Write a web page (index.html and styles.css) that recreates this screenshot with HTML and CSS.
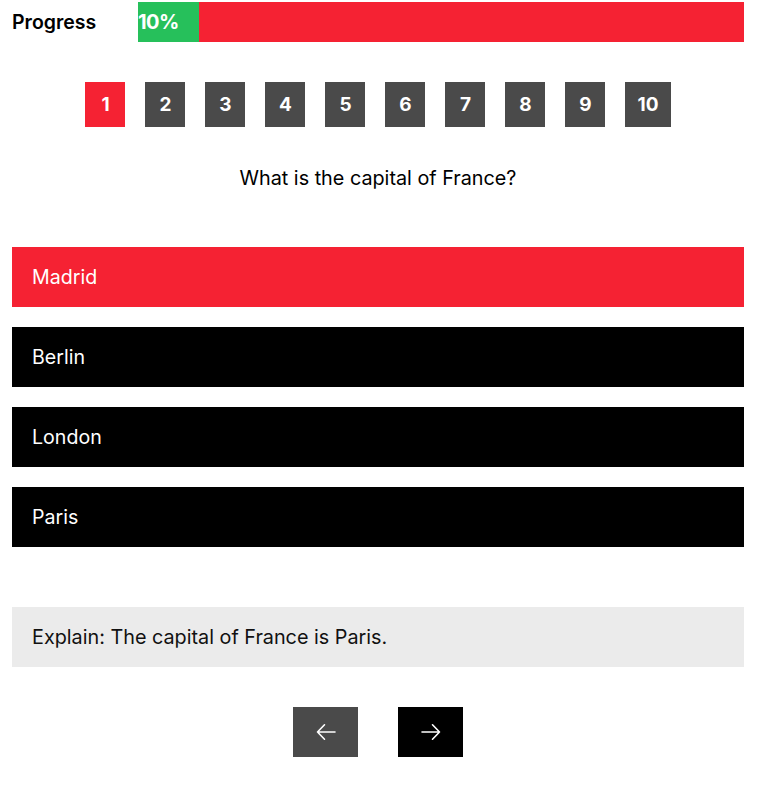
FILE: index.html
```html
<!DOCTYPE html>
<html>
<head>
<meta charset="utf-8">
<link rel="stylesheet" href="styles.css">
</head>
<body>
<div class="page">
  <div class="progress-row">
    <div class="progress-label">Progress</div>
    <div class="progress-track">
      <div class="progress-fill" style="width:10%">10%</div>
    </div>
  </div>
  <div class="numbers">
    <button class="num active">1</button>
    <button class="num">2</button>
    <button class="num">3</button>
    <button class="num">4</button>
    <button class="num">5</button>
    <button class="num">6</button>
    <button class="num">7</button>
    <button class="num">8</button>
    <button class="num">9</button>
    <button class="num">10</button>
  </div>
  <div class="question">What is the capital of France?</div>
  <div class="options">
    <div class="option wrong">Madrid</div>
    <div class="option">Berlin</div>
    <div class="option">London</div>
    <div class="option">Paris</div>
  </div>
  <div class="explain">Explain: The capital of France is Paris.</div>
  <div class="nav">
    <button class="nav-btn prev"><svg width="20" height="20" viewBox="0 0 20 20" fill="none" stroke="#fff" stroke-width="1.6" stroke-linecap="round" stroke-linejoin="round"><path d="M19 10H1.5M8.5 2.8L1.5 10l7 7.2"/></svg></button>
    <button class="nav-btn next"><svg width="20" height="20" viewBox="0 0 20 20" fill="none" stroke="#fff" stroke-width="1.6" stroke-linecap="round" stroke-linejoin="round"><path d="M1 10h17.5M11.5 2.8l7 7.2-7 7.2"/></svg></button>
  </div>
</div>
</body>
</html>
```
FILE: styles.css
```css
* { box-sizing: border-box; }
html, body { margin: 0; padding: 0; background: #fff; }
body { font-family: Inter, "Noto Sans", sans-serif; color: #000; }
.page { padding: 2px 22px 0 12px; }
.progress-row { display: flex; align-items: center; height: 40px; }
.progress-label { width: 126px; font-size: 19.5px; font-weight: 600; }
.progress-track { flex: 1; height: 40px; background: #f52233; }
.progress-fill { height: 40px; background: #26c05b; color: #fff; font-size: 20px; font-weight: 700; line-height: 40px; white-space: nowrap; letter-spacing: -0.5px; }
.numbers { display: flex; justify-content: center; gap: 20px; margin-top: 40px; }
.num { min-width: 40px; height: 45px; padding: 0 12px; border: 0; background: #4a4a4a; color: #fff; font-family: Inter, sans-serif; font-size: 19px; font-weight: 700; }
.num.active { background: #f52233; }
.question { text-align: center; font-size: 19.8px; line-height: 24px; margin-top: 39px; }
.options { display: flex; flex-direction: column; gap: 20px; margin-top: 57px; }
.option { height: 60px; background: #000; color: #fff; font-size: 19.6px; padding-left: 20px; display: flex; align-items: center; }
.option.wrong { background: #f52233; }
.explain { margin-top: 60px; height: 60px; background: #ebebeb; font-size: 19.8px; padding-left: 20px; display: flex; align-items: center; color: #111; }
.nav { display: flex; justify-content: center; gap: 40px; margin-top: 40px; }
.nav-btn { width: 65px; height: 50px; border: 0; display: flex; align-items: center; justify-content: center; padding: 0; }
.nav-btn.prev { background: #4a4a4a; }
.nav-btn.next { background: #000; }
```
